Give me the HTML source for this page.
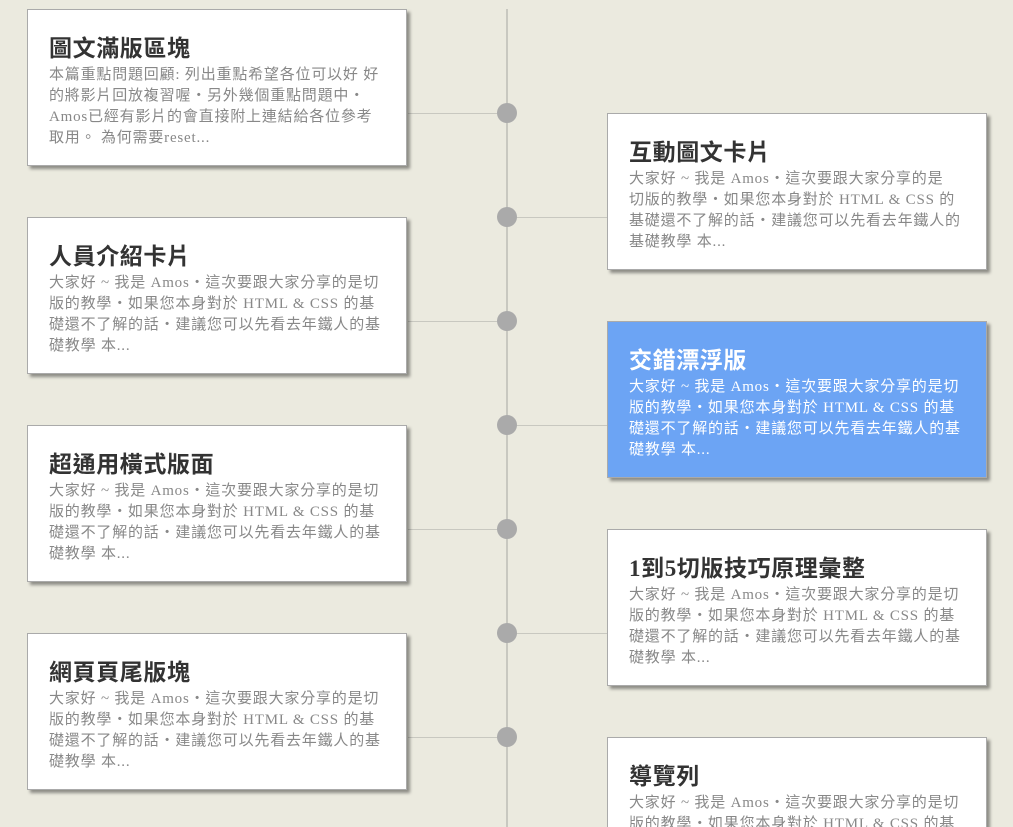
<!DOCTYPE html>
<html lang="zh-TW"><head><meta charset="utf-8"><style>
html,body{margin:0;padding:0;background:#ebeadf;width:1013px;height:827px;overflow:hidden;position:relative;font-family:"Liberation Serif","Noto Sans CJK TC",sans-serif}
.vl{position:absolute;left:506px;top:9px;width:2px;height:818px;background:#c8c8c0}
.dot{position:absolute;width:20px;height:20px;border-radius:50%;background:#aaa;left:497px}
.hl{position:absolute;height:1px;background:#c8c8c0}
.card{position:absolute;width:378px;height:155px;background:#fff;border:1px solid #aaa;box-shadow:3px 3px 3px rgba(0,0,0,.4);overflow:hidden}
.card h2{margin:0;position:absolute;left:21px;top:24px;font-size:23px;font-weight:bold;color:#333;line-height:30px;white-space:nowrap;letter-spacing:0.6px}
.card p{margin:0;position:absolute;left:21px;top:55px;font-size:15px;line-height:21px;color:#888;white-space:nowrap;letter-spacing:0.8px}
.card.blue{background:#6ca4f4}
.card.blue h2,.card.blue p{color:#fff}
.L{left:27px}.R{left:607px}
</style></head><body>
<div class="vl"></div>
<div class="hl" style="left:408px;width:100px;top:113px"></div>
<div class="hl" style="left:508px;width:100px;top:217px"></div>
<div class="hl" style="left:408px;width:100px;top:321px"></div>
<div class="hl" style="left:508px;width:100px;top:425px"></div>
<div class="hl" style="left:408px;width:100px;top:529px"></div>
<div class="hl" style="left:508px;width:100px;top:633px"></div>
<div class="hl" style="left:408px;width:100px;top:737px"></div>
<div class="dot" style="top:103px"></div>
<div class="dot" style="top:207px"></div>
<div class="dot" style="top:311px"></div>
<div class="dot" style="top:415px"></div>
<div class="dot" style="top:519px"></div>
<div class="dot" style="top:623px"></div>
<div class="dot" style="top:727px"></div>

<div class="card L" style="top:9px"><h2>圖文滿版區塊</h2><p>本篇重點問題回顧: 列出重點希望各位可以好 好<br>的將影片回放複習喔‧另外幾個重點問題中‧<br>Amos已經有影片的會直接附上連結給各位參考<br>取用。 為何需要reset...</p></div>
<div class="card R" style="top:113px"><h2>互動圖文卡片</h2><p>大家好 ~ 我是 Amos‧這次要跟大家分享的是<br>切版的教學‧如果您本身對於 HTML &amp; CSS 的<br>基礎還不了解的話‧建議您可以先看去年鐵人的<br>基礎教學 本...</p></div>
<div class="card L" style="top:217px"><h2>人員介紹卡片</h2><p>大家好 ~ 我是 Amos‧這次要跟大家分享的是切<br>版的教學‧如果您本身對於 HTML &amp; CSS 的基<br>礎還不了解的話‧建議您可以先看去年鐵人的基<br>礎教學 本...</p></div>
<div class="card R blue" style="top:321px"><h2>交錯漂浮版</h2><p>大家好 ~ 我是 Amos‧這次要跟大家分享的是切<br>版的教學‧如果您本身對於 HTML &amp; CSS 的基<br>礎還不了解的話‧建議您可以先看去年鐵人的基<br>礎教學 本...</p></div>
<div class="card L" style="top:425px"><h2>超通用橫式版面</h2><p>大家好 ~ 我是 Amos‧這次要跟大家分享的是切<br>版的教學‧如果您本身對於 HTML &amp; CSS 的基<br>礎還不了解的話‧建議您可以先看去年鐵人的基<br>礎教學 本...</p></div>
<div class="card R" style="top:529px"><h2>1到5切版技巧原理彙整</h2><p>大家好 ~ 我是 Amos‧這次要跟大家分享的是切<br>版的教學‧如果您本身對於 HTML &amp; CSS 的基<br>礎還不了解的話‧建議您可以先看去年鐵人的基<br>礎教學 本...</p></div>
<div class="card L" style="top:633px"><h2>網頁頁尾版塊</h2><p>大家好 ~ 我是 Amos‧這次要跟大家分享的是切<br>版的教學‧如果您本身對於 HTML &amp; CSS 的基<br>礎還不了解的話‧建議您可以先看去年鐵人的基<br>礎教學 本...</p></div>
<div class="card R" style="top:737px"><h2>導覽列</h2><p>大家好 ~ 我是 Amos‧這次要跟大家分享的是切<br>版的教學‧如果您本身對於 HTML &amp; CSS 的基<br>礎還不了解的話‧建議您可以先看去年鐵人的基<br>礎教學 本...</p></div>
</body></html>
